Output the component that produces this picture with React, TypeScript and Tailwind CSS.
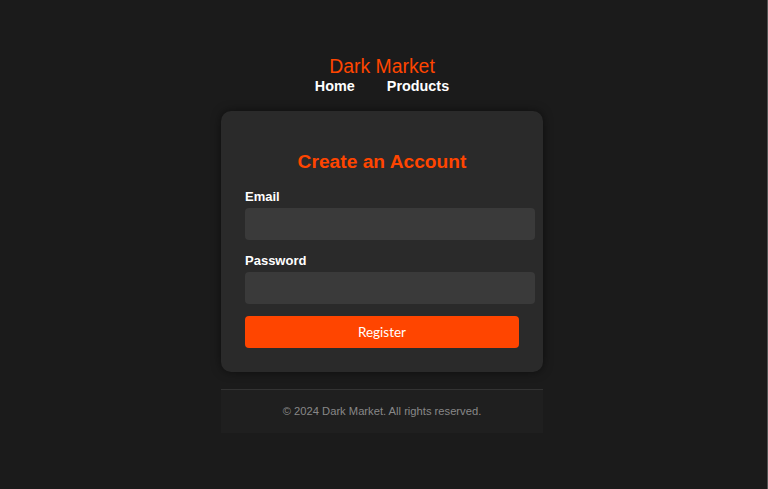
export default function App() {
  return (
    <div className="min-h-screen bg-[#1b1b1b] border-r border-[#555] flex flex-col items-center pr-[3px] font-['Liberation_Sans',Arial,sans-serif]">
      {/* Header */}
      <header className="mt-[55px] flex flex-col items-center">
        <h1 className="text-[19.4px] leading-[22px] text-[#ff4500]">Dark Market</h1>
        <nav className="flex gap-[32px] mt-[1px]">
          <a className="text-[14.4px] leading-[16px] font-bold text-white">Home</a>
          <a className="text-[14.4px] leading-[16px] font-bold text-white">Products</a>
        </nav>
      </header>

      {/* Register card */}
      <main className="mt-[17px] w-[322px] bg-[#2a2a2a] rounded-[10px] shadow-[0_0_10px_rgba(0,0,0,0.5)] px-[24px] pt-[40px] pb-[24px]">
        <h2 className="text-center text-[19.2px] leading-[22px] font-bold text-[#ff4500] mb-[16px]">
          Create an Account
        </h2>
        <form className="flex flex-col">
          <label className="text-[13px] leading-[15px] font-bold text-white mb-[4px]">Email</label>
          <input type="email" className="w-[290px] h-[32px] bg-[#3a3a3a] rounded-[4px] outline-none" />
          <label className="text-[13px] leading-[15px] font-bold text-white mt-[13px] mb-[4px]">Password</label>
          <input type="password" className="w-[290px] h-[32px] bg-[#3a3a3a] rounded-[4px] outline-none" />
          <button
            type="button"
            className="mt-[12px] w-full h-[32px] bg-[#ff4500] rounded-[4px] text-white text-[13.5px] pt-[1px] font-['Lato',sans-serif]"
          >
            Register
          </button>
        </form>
      </main>

      {/* Footer */}
      <footer className="mt-[17px] w-[322px] bg-[#1f1f1f] border-t border-[#333] h-[44px] flex items-center justify-center">
        <p className="text-[11.2px] text-[#888]">© 2024 Dark Market. All rights reserved.</p>
      </footer>
    </div>
  )
}
